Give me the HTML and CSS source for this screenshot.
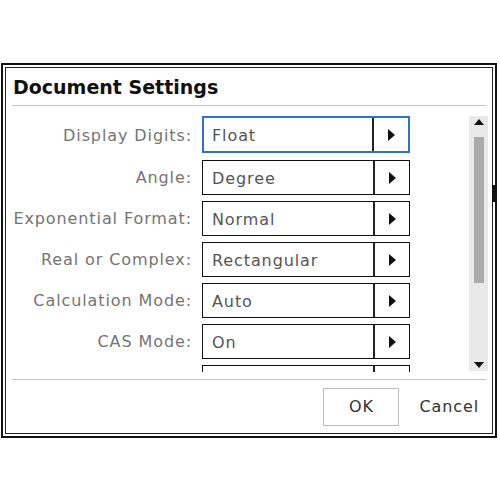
FILE: index.html
```html
<!DOCTYPE html>
<html>
<head>
<meta charset="utf-8">
<link rel="stylesheet" href="styles.css">
</head>
<body>
<div class="dialog">
  <div class="frame">
    <div class="title">Document Settings</div>
    <div class="rule"></div>
    <div class="body">
      <div class="rows">
        <div class="row">
          <span class="label">Display Digits:</span>
          <div class="field focused"><span class="value">Float</span><span class="arrow"></span></div>
        </div>
        <div class="row">
          <span class="label">Angle:</span>
          <div class="field"><span class="value">Degree</span><span class="arrow"></span></div>
        </div>
        <div class="row">
          <span class="label">Exponential Format:</span>
          <div class="field"><span class="value">Normal</span><span class="arrow"></span></div>
        </div>
        <div class="row">
          <span class="label">Real or Complex:</span>
          <div class="field"><span class="value">Rectangular</span><span class="arrow"></span></div>
        </div>
        <div class="row">
          <span class="label">Calculation Mode:</span>
          <div class="field"><span class="value">Auto</span><span class="arrow"></span></div>
        </div>
        <div class="row">
          <span class="label">CAS Mode:</span>
          <div class="field"><span class="value">On</span><span class="arrow"></span></div>
        </div>
        <div class="row">
          <span class="label"></span>
          <div class="field"><span class="value"></span><span class="arrow"></span></div>
        </div>
      </div>
      <div class="scrollbar">
        <span class="up"></span>
        <div class="track"><div class="thumb"></div></div>
        <span class="down"></span>
      </div>
    </div>
    <div class="rule"></div>
    <div class="footer">
      <button class="btn ok">OK</button>
      <button class="btn cancel">Cancel</button>
    </div>
    <span class="grip"></span>
  </div>
</div>
</body>
</html>
```
FILE: styles.css
```css
html, body {
  margin: 0;
  background: #fff;
}

body {
  font-family: "DejaVu Sans", sans-serif;
}

.dialog {
  margin: 63px 0 0 1px;
  width: 496px;
  height: 375px;
  box-sizing: border-box;
  border: 2px solid #111;
  padding: 2px;
}

.frame {
  position: relative;
  height: 100%;
  box-sizing: border-box;
  border: 1px solid #222;
  display: flex;
  flex-direction: column;
}

.title {
  height: 37px;
  padding-left: 7px;
  display: flex;
  align-items: center;
  font-weight: bold;
  font-size: 19px;
  color: #111;
  flex: none;
}

.rule {
  height: 1px;
  background: #c4c4c4;
  margin: 0 6px;
  flex: none;
}

/* settings list with its scrollbar */
.body {
  height: 273px;
  display: flex;
  align-items: flex-start;
  padding-top: 10px;
  box-sizing: border-box;
  flex: none;
}

.rows {
  width: 405px;
  height: 256px;
  overflow: hidden;
  display: flex;
  flex-direction: column;
  gap: 6px;
}

.row {
  display: flex;
  align-items: center;
  gap: 10px;
  flex: none;
}

.label {
  width: 186px;
  text-align: right;
  font-size: 16px;
  letter-spacing: 0.9px;
  color: #747474;
  white-space: nowrap;
}

.field {
  width: 208px;
  height: 35px;
  box-sizing: border-box;
  border: 1px solid #111;
  display: flex;
  align-items: stretch;
  flex: none;
}

.field.focused {
  border: 2px solid #2a73cf;
  height: 37px;
  margin-bottom: 1px;
}

.value {
  flex: 1;
  display: flex;
  align-items: center;
  padding-left: 9px;
  padding-top: 1px;
  font-size: 16px;
  letter-spacing: 0.9px;
  color: #555;
}

.focused .value {
  padding-left: 8px;
}

.arrow {
  width: 34px;
  border-left: 2px solid #222;
  display: flex;
  align-items: center;
  justify-content: center;
}

.arrow::after {
  content: "";
  border-left: 7px solid #111;
  border-top: 6px solid transparent;
  border-bottom: 6px solid transparent;
}

.scrollbar {
  margin-left: 58px;
  width: 19px;
  height: 255px;
  background: #e9e9e9;
  display: flex;
  flex-direction: column;
  align-items: center;
  flex: none;
}

.up, .down {
  height: 12px;
  display: flex;
  align-items: center;
  flex: none;
}

.up::after {
  content: "";
  border-bottom: 6px solid #111;
  border-left: 5px solid transparent;
  border-right: 5px solid transparent;
}

.down::after {
  content: "";
  border-top: 6px solid #111;
  border-left: 5px solid transparent;
  border-right: 5px solid transparent;
}

.track {
  flex: 1;
  width: 10px;
  padding-top: 9px;
}

.thumb {
  height: 146px;
  background: #ababab;
}

.footer {
  flex: 1;
  display: flex;
  align-items: center;
  justify-content: flex-end;
  padding-right: 13px;
  gap: 20px;
}

.btn {
  font-family: "DejaVu Sans", sans-serif;
  font-size: 16px;
  letter-spacing: 0.9px;
  color: #333;
  background: #fff;
  margin: 0;
}

.ok {
  width: 76px;
  height: 38px;
  border: 1px solid #bdbdbd;
}

.cancel {
  border: none;
  padding: 0;
}

/* resize grip on the right edge */
.grip {
  position: absolute;
  right: -3px;
  top: 117px;
  width: 3px;
  height: 17px;
  background: #111;
}
```
